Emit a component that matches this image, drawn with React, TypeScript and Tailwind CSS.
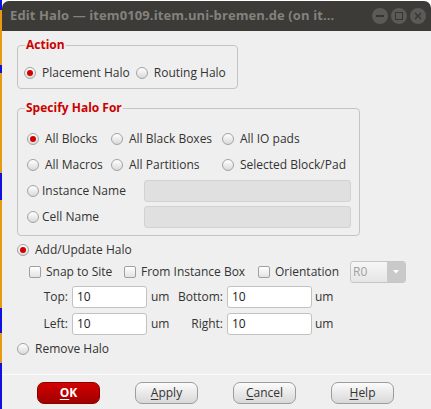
import type { ReactNode } from 'react';

const FONT = { fontFamily: '"Open Sans", "Noto Sans", sans-serif' };

function Radio({ checked = false }: { checked?: boolean }) {
  return (
    <span className="w-[12px] h-[12px] shrink-0 rounded-full border border-[#a3a3a3] bg-gradient-to-b from-[#ffffff] to-[#d9d9d9] flex items-center justify-center">
      {checked && <span className="w-[6px] h-[6px] rounded-full bg-[#d10000]" />}
    </span>
  );
}

function Check() {
  return (
    <span className="w-[12px] h-[12px] shrink-0 rounded-[2px] border border-[#a0a0a0] bg-gradient-to-b from-[#ffffff] to-[#e3e3e3]" />
  );
}

function Option({ label, checked, gap = 'gap-[6px]' }: { label: string; checked?: boolean; gap?: string }) {
  return (
    <span className={`flex items-center ${gap} whitespace-nowrap`}>
      <Radio checked={checked} />
      <span>{label}</span>
    </span>
  );
}

function Group({ title, className, children }: { title: string; className: string; children: ReactNode }) {
  return (
    <div className={`relative border border-[#c4c4c4] rounded-[4px] ${className}`}>
      <span className="absolute -top-[10px] left-[7px] px-[1px] bg-[#efefef] text-[#cc0000] font-bold text-[12px] leading-[18px]">
        {title}
      </span>
      {children}
    </div>
  );
}

function Field({ value, w }: { value: string; w: string }) {
  return (
    <div className={`${w} h-[22px] bg-white border border-[#c2c2c2] rounded-[3px] flex items-center pl-[4px] text-[#222]`}>
      {value}
    </div>
  );
}

function Btn({ label, primary = false }: { label: string; primary?: boolean }) {
  const first = label.charAt(0);
  const rest = label.slice(1);
  return (
    <button
      className={
        primary
          ? 'w-[63px] h-[22px] rounded-[7px] border border-[#8a0000] bg-gradient-to-b from-[#d40000] to-[#a00000] text-white font-bold text-[12px] leading-none'
          : 'w-[63px] h-[22px] rounded-[7px] border border-[#9c9c9c] bg-gradient-to-b from-[#fbfbfb] to-[#d8d8d8] text-[#333] text-[12px] leading-none'
      }
    >
      <span className="underline underline-offset-[2px]">{first}</span>
      {rest}
    </button>
  );
}

const strip = [
  ['h-[10px]', 'bg-[#1010e0]'],
  ['h-[55px]', 'bg-[#e89a10]'],
  ['h-[8px]', 'bg-[#1010e0]'],
  ['h-[100px]', 'bg-[#e89a10]'],
  ['h-[27px]', 'bg-[#1010e0]'],
  ['h-[108px]', 'bg-[#e89a10]'],
  ['h-[25px]', 'bg-[#1010e0]'],
  ['h-[30px]', 'bg-[#e89a10]'],
  ['h-[46px]', 'bg-[#1010e0]'],
];

export default function App() {
  return (
    <div className="w-[431px] h-[409px] flex bg-white overflow-hidden text-[12px] text-[#333]" style={FONT}>
      {/* desktop behind the window */}
      <div className="w-[2px] flex flex-col shrink-0">
        {strip.map(([h, c], i) => (
          <div key={i} className={`${h} ${c}`} />
        ))}
      </div>

      <div className="flex-1 flex flex-col pt-[1px]">
        {/* Title bar */}
        <div className="h-[30px] shrink-0 bg-[#3c3b37] rounded-t-[7px] flex items-center pl-[8px] pr-[5px]">
          <span className="flex-1 text-[13px] font-bold tracking-[0.1px] text-[#83827d] whitespace-nowrap overflow-hidden">
            Edit Halo — item0109.item.uni-bremen.de (on it...
          </span>
          <div className="flex gap-[3px]">
            <span className="w-[16px] h-[16px] rounded-full bg-[#5b5a56] flex items-center justify-center">
              <span className="w-[8px] h-[1.5px] bg-[#36352f]" />
            </span>
            <span className="w-[16px] h-[16px] rounded-full bg-[#5b5a56] flex items-center justify-center">
              <span className="w-[8px] h-[8px] border-[1.5px] border-[#36352f]" />
            </span>
            <span className="w-[16px] h-[16px] rounded-full bg-[#5b5a56] flex items-center justify-center">
              <svg width="8" height="8" viewBox="0 0 8 8">
                <path d="M1 1L7 7M7 1L1 7" stroke="#36352f" strokeWidth="1.4" />
              </svg>
            </span>
          </div>
        </div>

        {/* Body */}
        <div className="flex-1 bg-[#efefef] flex flex-col">
          <div className="pl-[15px] flex flex-col">
            <Group title="Action" className="mt-[14px] w-[221px] h-[44px]">
              <div className="pt-[19px] pl-[6px] flex items-center gap-[6px] h-[35px]">
                <Option label="Placement Halo" checked />
                <Option label="Routing Halo" />
              </div>
            </Group>

            <Group title="Specify Halo For" className="mt-[19px] w-[343px] h-[128px]">
              <div className="pt-[17px] pl-[9px] flex flex-col">
                <div className="h-[26px] flex items-center">
                  <div className="w-[84px]"><Option label="All Blocks" checked /></div>
                  <div className="w-[111px]"><Option label="All Black Boxes" /></div>
                  <Option label="All IO pads" />
                </div>
                <div className="h-[26px] flex items-center">
                  <div className="w-[84px]"><Option label="All Macros" /></div>
                  <div className="w-[111px]"><Option label="All Partitions" /></div>
                  <Option label="Selected Block/Pad" />
                </div>
                <div className="h-[26px] flex items-center">
                  <div className="w-[117px]"><Option label="Instance Name" gap="gap-[3px]" /></div>
                  <div className="w-[207px] h-[22px] rounded-[3px] border border-[#d2d2d2] bg-[#e0e0e0]" />
                </div>
                <div className="h-[26px] flex items-center">
                  <div className="w-[117px]"><Option label="Cell Name" gap="gap-[3px]" /></div>
                  <div className="w-[207px] h-[22px] rounded-[3px] border border-[#d2d2d2] bg-[#e0e0e0]" />
                </div>
              </div>
            </Group>

            <div className="mt-[6px] h-[16px] flex items-center">
              <Option label="Add/Update Halo" checked />
            </div>

            <div className="mt-[3px] h-[22px] flex items-center pl-[12px]">
              <span className="w-[95px] flex items-center gap-[5px]"><Check />Snap to Site</span>
              <span className="w-[134px] flex items-center gap-[5px]"><Check />From Instance Box</span>
              <span className="w-[92px] flex items-center gap-[5px]"><Check />Orientation</span>
              <div className="w-[56px] h-[22px] rounded-[3px] border border-[#c6c6c6] bg-gradient-to-b from-[#f6f6f6] to-[#e6e6e6] flex overflow-hidden">
                <span className="flex-1 pl-[2px] flex items-center text-[#a0a0a0]">R0</span>
                <span className="w-[18px] bg-[#c9c9c9] flex items-center justify-center">
                  <svg width="6" height="4" viewBox="0 0 6 4">
                    <path d="M0 0H6L3 3.5Z" fill="#ffffff" />
                  </svg>
                </span>
              </div>
            </div>

            <div className="mt-[3px] h-[22px] flex items-center">
              <span className="w-[51px] text-right">Top:</span>
              <span className="ml-[4px]"><Field value="10" w="w-[75px]" /></span>
              <span className="ml-[4px] w-[24px]">um</span>
              <span className="w-[48px] text-right">Bottom:</span>
              <span className="ml-[4px]"><Field value="10" w="w-[85px]" /></span>
              <span className="ml-[3px]">um</span>
            </div>

            <div className="mt-[5px] h-[22px] flex items-center">
              <span className="w-[51px] text-right">Left:</span>
              <span className="ml-[4px]"><Field value="10" w="w-[75px]" /></span>
              <span className="ml-[4px] w-[24px]">um</span>
              <span className="w-[48px] text-right">Right:</span>
              <span className="ml-[4px]"><Field value="10" w="w-[85px]" /></span>
              <span className="ml-[3px]">um</span>
            </div>

            <div className="mt-[6px] h-[16px] flex items-center">
              <Option label="Remove Halo" />
            </div>
          </div>

          <div className="mt-[17px] h-[1px] bg-[#fbfbfb]" />

          <div className="mt-[7px] pl-[35px] flex gap-[35px]">
            <Btn label="OK" primary />
            <Btn label="Apply" />
            <Btn label="Cancel" />
            <Btn label="Help" />
          </div>
        </div>
      </div>
    </div>
  );
}
